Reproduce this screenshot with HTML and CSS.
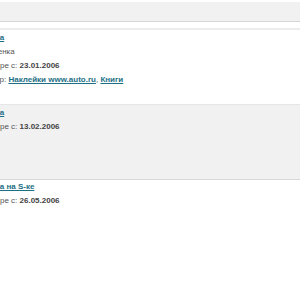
FILE: index.html
```html
<!DOCTYPE html>
<html>
<head>
<meta charset="utf-8">
<link rel="stylesheet" href="styles.css">
</head>
<body>
<div class="page">
  <div class="topbar"></div>
  <div class="rule"></div>
  <div class="subrule"></div>
  <div class="item first">
    <div class="line l-title">Тестовая <a href="#">машина</a></div>
    <div class="line l-rate">Оценка</div>
    <div class="line l-date">В игре с: <b class="date">23.01.2006</b></div>
    <div class="line l-sponsor">Спонсор: <a href="#">Наклейки www.auto.ru</a>, <a href="#">Книги</a></div>
  </div>
  <div class="item alt">
    <div class="line l-title">Тестовая <a href="#">машина</a></div>
    <div class="line l-date">В игре с: <b class="date">13.02.2006</b></div>
  </div>
  <div class="item last">
    <div class="line l-title">Тестовая <a href="#">машина на S-ке</a></div>
    <div class="line l-date">В игре с: <b class="date">26.05.2006</b></div>
  </div>
</div>
</body>
</html>
```
FILE: styles.css
```css
html, body {
  margin: 0;
  padding: 0;
  background: #fff;
  overflow: hidden;
}
.page {
  width: 300px;
  height: 300px;
  overflow: hidden;
  font-family: "Liberation Sans", Arial, sans-serif;
  font-size: 8px;
  color: #555;
}
.topbar {
  margin-top: 2px;
  height: 19px;
  background: #f1f1f1;
}
.rule {
  height: 1px;
  background: #d6d6d6;
}
.subrule {
  margin-top: 6px;
  height: 2px;
  background: #ececec;
}
.item.first {
  padding: 1px 0 17px 0;
}
.item.alt {
  background: #f1f1f1;
  border-top: 1px solid #e6e6e6;
  border-bottom: 1px solid #d8d8d8;
  padding: 1px 0 45px 0;
}
.line {
  white-space: nowrap;
  line-height: 14px;
}
.l-title { margin-left: -63px; }
.l-rate { margin-left: -13px; }
.l-date { margin-left: -15px; }
.l-sponsor { margin-left: -28px; }
.line a {
  color: #1d6f86;
  font-weight: bold;
  text-decoration: underline;
}
.date {
  color: #444;
}
```
